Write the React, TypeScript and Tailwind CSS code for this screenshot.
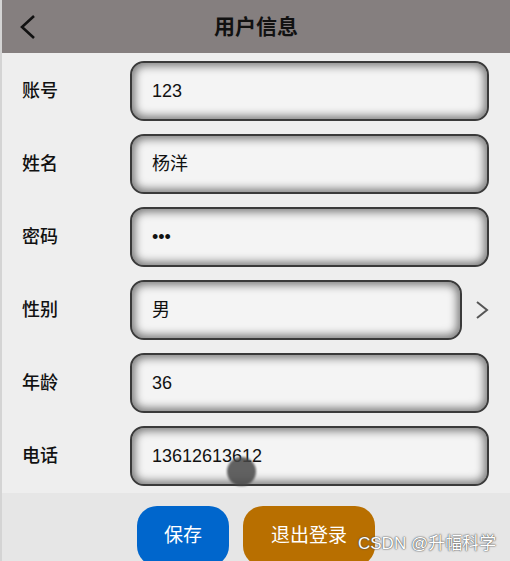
import React from 'react';

const rows: { label: string; value: string; select?: boolean }[] = [
  { label: '账号', value: '123' },
  { label: '姓名', value: '杨洋' },
  { label: '密码', value: '•••' },
  { label: '性别', value: '男', select: true },
  { label: '年龄', value: '36' },
  { label: '电话', value: '13612613612' },
];

export default function App() {
  return (
    <div
      className="relative w-[510px] h-[561px] overflow-hidden bg-[#eeeeee] border-l-2 border-[#d4d4d4] text-[#111]"
      style={{ fontFamily: '"Liberation Sans", "Noto Sans CJK SC", sans-serif' }}
    >
      <header className="flex items-center h-[53px] bg-[#857f7f]">
        <div className="w-[60px] pl-[18px]">
          <svg width="16" height="26" viewBox="0 0 16 26" fill="none">
            <polyline points="14,2 2,13 14,24" stroke="#111" strokeWidth="2.6" strokeLinejoin="miter" />
          </svg>
        </div>
        <h1 className="flex-1 text-center text-[21px] font-bold">用户信息</h1>
        <div className="w-[60px]" />
      </header>

      <main className="flex flex-col gap-[13px] pt-[8px]">
        {rows.map((r) => (
          <div key={r.label} className="flex items-center h-[60px]">
            <span className="w-[128px] pl-[20px] text-[18px] font-medium">{r.label}</span>
            <div
              className={`flex items-center h-[60px] ${r.select ? 'w-[332px]' : 'w-[359px]'} pl-[20px] rounded-[14px] border-2 border-[#3a3a3a] bg-[#f4f4f4] shadow-[inset_0_0_8px_3px_rgba(0,0,0,0.5)] text-[18px]`}
            >
              {r.value}
            </div>
            {r.select && (
              <svg className="ml-[13px]" width="14" height="20" viewBox="0 0 14 20" fill="none">
                <polyline points="2,2 12,10 2,18" stroke="#555" strokeWidth="2" />
              </svg>
            )}
          </div>
        ))}
      </main>

      <footer className="mt-[7px] h-[70px] bg-[#e6e6e6] flex gap-[14px] pl-[135px] pt-[13px]">
        <button className="w-[92px] h-[60px] rounded-[20px] bg-[#0066cc] text-white text-[19px]">保存</button>
        <button className="w-[132px] h-[60px] rounded-[20px] bg-[#b86f00] text-white text-[19px]">退出登录</button>
      </footer>

      <div className="absolute left-[225px] top-[457px] w-[29px] h-[29px] rounded-full bg-[#474747]/85 blur-[1px]" />
      <div className="absolute left-[356px] top-[531px] text-[17px] text-white [text-shadow:0_0_2px_#555,0_0_1px_#333]">
        CSDN @升幅科学
      </div>
    </div>
  );
}
